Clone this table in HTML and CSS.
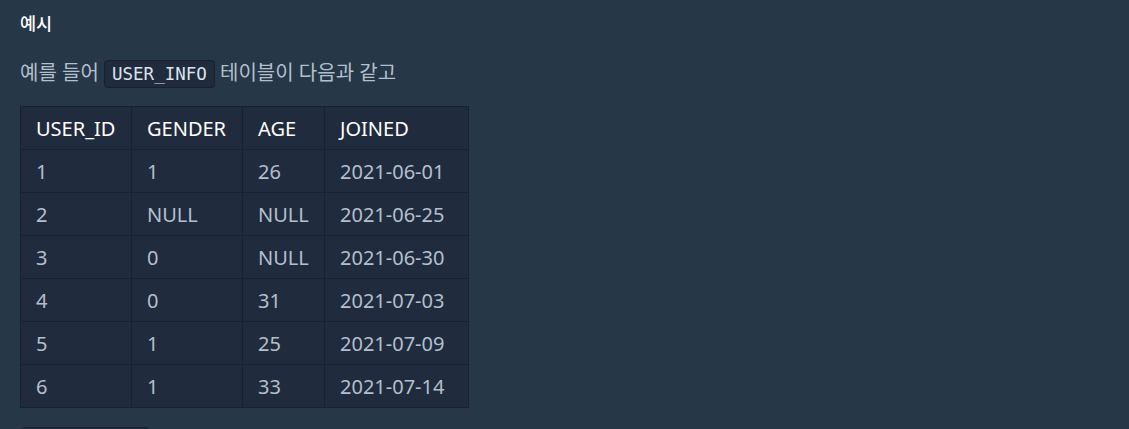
FILE: index.html
```html
<!DOCTYPE html>
<html lang="ko">
<head>
<meta charset="utf-8">
<link rel="stylesheet" href="styles.css">
</head>
<body>
<div class="content">
  <h5 class="heading">예시</h5>
  <p class="para">예를 들어 <code class="code">USER_INFO</code> 테이블이 다음과 같고</p>
  <table class="grid">
    <thead>
      <tr><th class="c1">USER_ID</th><th class="c2">GENDER</th><th class="c3">AGE</th><th class="c4">JOINED</th></tr>
    </thead>
    <tbody>
      <tr><td>1</td><td>1</td><td>26</td><td>2021-06-01</td></tr>
      <tr><td>2</td><td>NULL</td><td>NULL</td><td>2021-06-25</td></tr>
      <tr><td>3</td><td>0</td><td>NULL</td><td>2021-06-30</td></tr>
      <tr><td>4</td><td>0</td><td>31</td><td>2021-07-03</td></tr>
      <tr><td>5</td><td>1</td><td>25</td><td>2021-07-09</td></tr>
      <tr><td>6</td><td>1</td><td>33</td><td>2021-07-14</td></tr>
    </tbody>
  </table>
  <div class="next"></div>
</div>
</body>
</html>
```
FILE: styles.css
```css
html, body {
  margin: 0;
  padding: 0;
  background: #263747;
}
body {
  font-family: "Noto Sans", "Noto Sans CJK KR", sans-serif;
  color: #b2c0cc;
  overflow: hidden;
  height: 429px;
}
.content {
  padding: 8px 20px 0 20px;
}
.heading {
  margin: 0;
  font-size: 17.5px;
  line-height: 30px;
  font-weight: 500;
  color: #ffffff;
}
.para {
  margin: 20px 0 0 0;
  font-size: 20px;
  line-height: 30px;
}
.code {
  font-family: "DejaVu Sans Mono", monospace;
  font-size: 17.5px;
  background: #202b3d;
  border: 1px solid #172130;
  border-radius: 4px;
  padding: 3px 7px;
  color: #dbe3ea;
}
.grid {
  margin-top: 17px;
  border-collapse: collapse;
  background: #202b3d;
  font-size: 20px;
  table-layout: fixed;
  width: 448px;
}
.grid th, .grid td {
  box-sizing: border-box;
  border: 1px solid #172130;
  padding: 0 0 0 15px;
  height: 43px;
  text-align: left;
  font-weight: 400;
  white-space: nowrap;
}
.grid th {
  color: #ffffff;
}
.c1 { width: 111px; }
.c2 { width: 111px; }
.c3 { width: 82px; }
.c4 { width: 144px; }
.next {
  margin-top: 19px;
  margin-left: 2px;
  width: 127px;
  height: 10px;
  background: #202b3d;
  border-top: 1px solid #172130;
  border-radius: 4px 4px 0 0;
}
```
